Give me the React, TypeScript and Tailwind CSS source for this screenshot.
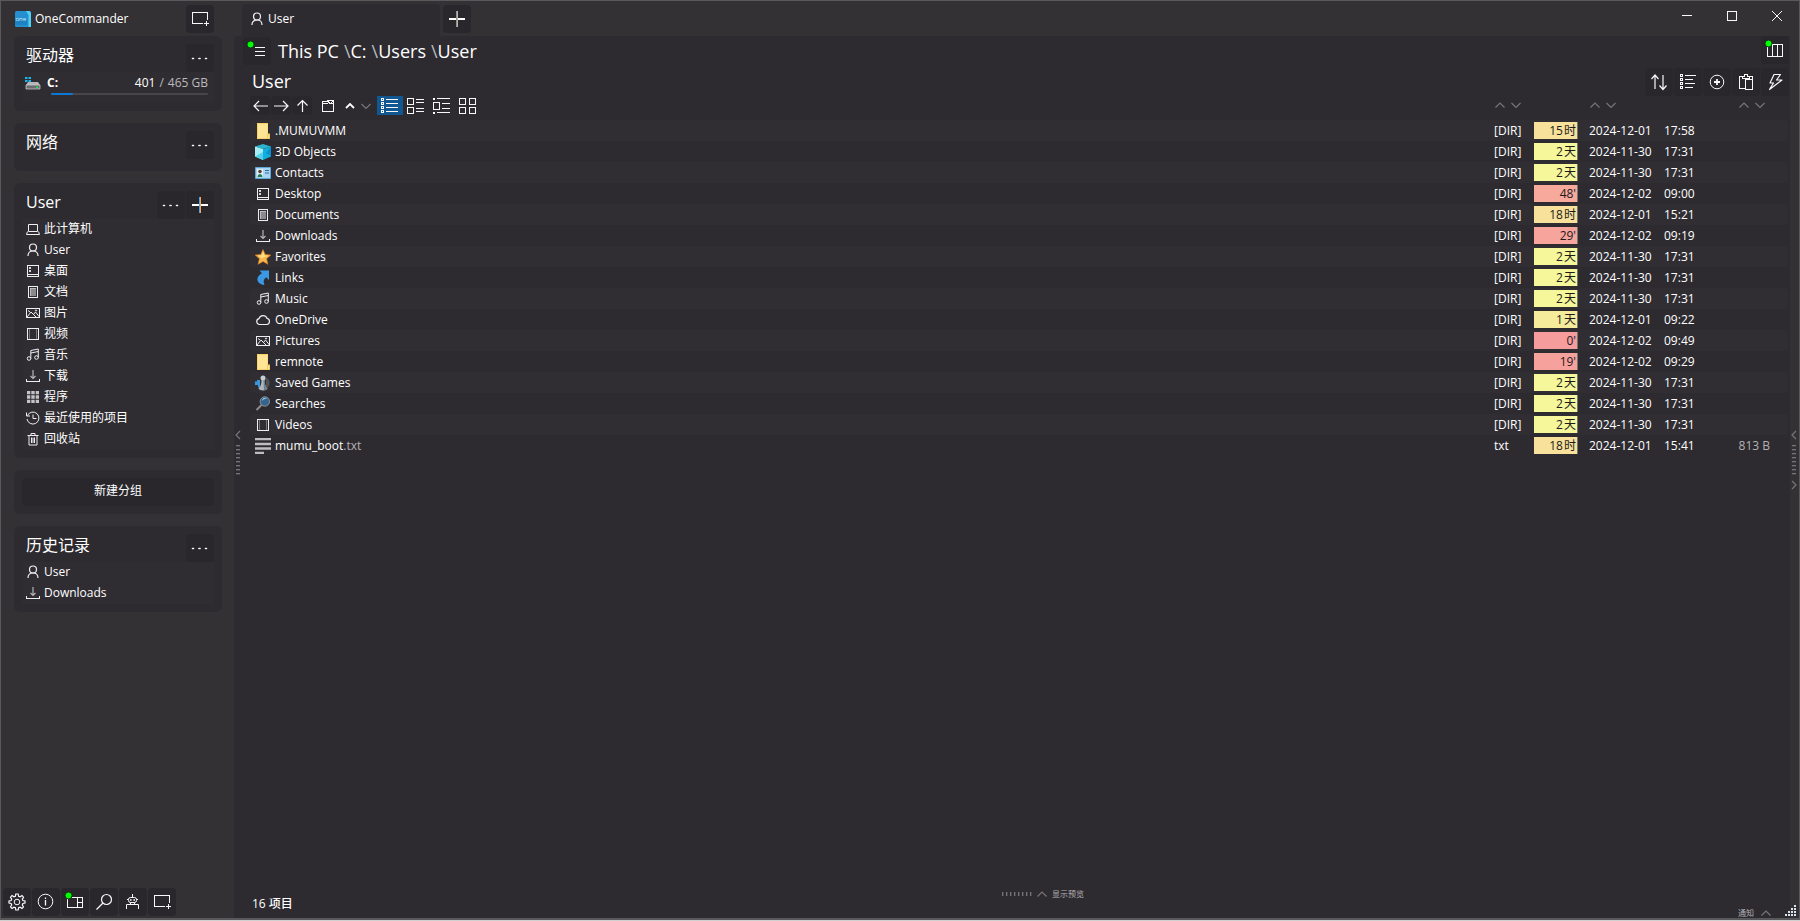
import type { ReactNode } from "react";

type IconName =
  | "pc" | "user" | "desktop" | "doc" | "picture" | "video" | "music" | "download"
  | "apps" | "recent" | "trash" | "cloud" | "folder" | "cube" | "contact" | "star"
  | "link" | "games" | "search" | "text";

const glyphs: Record<IconName, ReactNode> = {
  pc: (
    <>
      <path d="M3.500 3.500h9v7h-9z" />
      <path d="M2.500 10.500 1.500 13.500h13l-1-3" />
    </>
  ),
  user: (
    <>
      <circle cx="8" cy="5.500" r="3.500" strokeWidth="1.200" />
      <path d="M3 14c0-3 1.700-5 5-5s5 2 5 5" strokeWidth="1.200" />
    </>
  ),
  desktop: (
    <>
      <path d="M2.500 2.500h11v11h-11zM2.500 11.500h11" shapeRendering="crispEdges" />
      <path d="M4 4h2v2H4zM4 7h2v2H4z" fill="#d8d8d8" stroke="none" />
    </>
  ),
  doc: (
    <>
      <path d="M3.500 2.500h9v11h-9z" shapeRendering="crispEdges" />
      <path d="M5 4h6v8H5z" fill="#8a898c" stroke="none" />
      <path d="M5.500 4v8M6 4.500h5" stroke="#bbb" />
    </>
  ),
  picture: (
    <>
      <path d="M1.500 3.500h13v9h-13z" shapeRendering="crispEdges" />
      <path d="M2 12l4-5 5 5M8.500 9.500 10.500 7l4 5M3 5.500l2 1.500" />
      <circle cx="11" cy="5.500" r=".6" />
    </>
  ),
  video: (
    <>
      <path d="M2.500 2.500h11v11h-11z" shapeRendering="crispEdges" />
      <path d="M4.500 3v10M11.500 3v10" stroke="#77767a" shapeRendering="crispEdges" />
    </>
  ),
  music: (
    <>
      <circle cx="4" cy="11.500" r="1.800" />
      <circle cx="11.500" cy="10.500" r="1.800" />
      <path d="M5.800 11.500V3.500l7.500-1.500v8.500M5.800 6l7.500-1.500" />
    </>
  ),
  download: (
    <>
      <path d="M8 2v8M5.500 8 8 10.500 10.500 8" stroke="#b4b3b6" strokeWidth="1.200" />
      <path d="M1.500 11v2.500h13V11" shapeRendering="crispEdges" />
    </>
  ),
  apps: (
    <path
      d="M2 2h3.300v3.300H2zM6.300 2h3.400v3.300H6.300zM10.700 2H14v3.300h-3.300zM2 6.300h3.300v3.400H2zM6.300 6.300h3.400v3.400H6.300zM10.700 6.300H14v3.400h-3.300zM2 10.700h3.300V14H2zM6.300 10.700h3.400V14H6.300zM10.700 10.700H14V14h-3.300z"
      fill="#c4c3c6"
      stroke="none"
    />
  ),
  recent: (
    <>
      <path d="M2.500 5.500a6 6 0 1 1-.5 3.500M1.500 2.500v3.500H5" />
      <path d="M8 4.500V8.500h3.500" />
    </>
  ),
  trash: (
    <path d="M2.500 4.500h11M6 4.500v-2h4v2M4 4.500v9.500h8V4.500M6.500 6.500v5.500M8 6.500v5.500M9.500 6.500v5.500" />
  ),
  cloud: (
    <path d="M4.500 12.500a3 3 0 0 1-.5-5.900 4.200 4.200 0 0 1 8-.2 3.100 3.100 0 0 1-.2 6.100z" strokeWidth="1.200" />
  ),
  folder: (
    <>
      <path d="M2 0h11v10.500h2V16H2z" fill="#f9d368" stroke="none" />
      <path d="M3 1h9.500v9.500L12 15H3z" fill="#ffe595" stroke="none" />
      <path d="M12.500 11.500h2v4h-2z" fill="#ffe9a8" stroke="#e8b83c" strokeWidth=".6" />
    </>
  ),
  cube: (
    <>
      <path d="M8 0l8 2.500-8 2.500L0 2.500z" fill="#2bb4cf" stroke="none" />
      <path d="M0 2.500 8 5v11l-8-3.500z" fill="#a5edf6" stroke="none" />
      <path d="M16 2.500 8 5v11l8-3.500z" fill="#12aede" stroke="none" />
      <path d="M0 12.500 8 8v8z" fill="#4fd2e8" stroke="none" />
      <path d="M16 2.500 11 9l5 3z" fill="#0a8fd0" stroke="none" />
    </>
  ),
  contact: (
    <>
      <path d="M.5 2.500h15v11H.5z" fill="#a8d6f2" stroke="#5aa7d8" />
      <path d="M2 4h6v8H2z" fill="#e4f2f8" stroke="none" />
      <circle cx="5" cy="6.500" r="1.800" fill="#5b4034" stroke="none" />
      <path d="M2.500 12c0-4 5-4 5 0z" fill="#2d7d55" stroke="none" />
      <path d="M10 5.500h4M10 8h4" stroke="#2b6ea5" />
    </>
  ),
  star: (
    <>
      <path d="M8 .5l2.200 5 5.600.5-4.200 3.700 1.300 5.600L8 12.400l-4.900 2.900 1.300-5.600L.2 6l5.600-.5z" fill="#f9b64a" stroke="#d98224" strokeWidth=".6" />
      <path d="M8 2.200l1.500 4 3.500.5-6.500 2.500L3 6.600l3.500-.4z" fill="#ffdd84" stroke="none" />
    </>
  ),
  link: (
    <path d="M4.500.5H14v9.500L11.200 7.200C8.500 9 8 11.500 9.500 15 4 14.500 1 10.500 3 7c1-2 2.500-2.800 4-3.700z" fill="#3a98e4" stroke="none" />
  ),
  games: (
    <>
      <path d="M11 2.500a6 6 0 0 1 0 11z" fill="#515257" stroke="none" />
      <path d="M0 6.500h2V5h3v8l-2-1v-2H0z" fill="#3c95dc" stroke="none" />
      <circle cx="8" cy="3" r="2.500" fill="#c4d0d4" stroke="none" />
      <path d="M6.500 5h3c0 4 1 6.500 3 8.500-1 2.500-8 2.500-9 0 2-2 3-4.500 3-8.500z" fill="#a9b8bd" stroke="none" />
      <path d="M8.500 5h1c0 4 1 6.500 3 8.500-.5 1-2 1.500-3.500 1.700z" fill="#6f7e84" stroke="none" />
    </>
  ),
  search: (
    <>
      <path d="M1.500 14 6.500 9" stroke="#8f8b88" strokeWidth="2" />
      <circle cx="9.800" cy="5.500" r="4.700" fill="#35658f" stroke="#8d9299" />
      <path d="M7 5a3 3 0 0 1 5-2.500c-2 0-4 1-5 2.500z" fill="#92bfe0" stroke="none" />
    </>
  ),
  text: (
    <path d="M0 1h16M0 6h16M0 10.500h16M0 15h9" stroke="#bdbcbf" strokeWidth="2.300" />
  ),
};

function Glyph({ name }: { name: IconName }) {
  return (
    <svg viewBox="0 0 16 16" className="size-4 shrink-0" fill="none" stroke="#efeef0" aria-hidden="true">
      {glyphs[name]}
    </svg>
  );
}

function Line({ children }: { children: ReactNode }) {
  return (
    <svg viewBox="0 0 18 18" className="size-[18px] shrink-0 overflow-visible" fill="none" stroke="#f8f8f8" strokeWidth="1" aria-hidden="true">
      {children}
    </svg>
  );
}

function Tool({ label, children }: { label: string; children: ReactNode }) {
  return (
    <button type="button" aria-label={label} className="flex size-7 shrink-0 items-center justify-center rounded-sm bg-[#29272c]">
      {children}
    </button>
  );
}

const Dots = () => (
  <Line>
    <path d="M1 9h2v1H1zM7.500 9h2v1h-2zM14 9h2v1h-2z" fill="#fff" stroke="#fff" strokeWidth=".4" />
  </Line>
);

const Plus = () => (
  <Line>
    <path d="M1 9h16" stroke="#fff" strokeWidth="2" />
    <path d="M8.500 1v16" stroke="#5b9fe0" />
    <path d="M9.500 1v16" stroke="#f0a860" />
  </Line>
);

const NewWindow = () => (
  <Line>
    <path d="M12 13.500H1.500v-11h15v7M15.500 11v5M13 13.500h5" shapeRendering="crispEdges" />
  </Line>
);

const GreenDot = () => <circle cx="2.500" cy="2.500" r="3.500" fill="#00ff00" stroke="#143014" />;

function Chevron({ dir, tone = "#77757a" }: { dir: "up" | "down" | "left" | "right"; tone?: string }) {
  const d = {
    up: "M1.500 8.500 6 4l4.500 4.500",
    down: "M1.500 4 6 8.500 10.500 4",
    left: "M8 2 4 6l4 4",
    right: "M4 2l4 4-4 4",
  }[dir];
  return (
    <svg viewBox="0 0 12 12" className="size-3 shrink-0" fill="none" stroke={tone} strokeWidth="1.200" aria-hidden="true">
      <path d={d} />
    </svg>
  );
}

function Card({ title, tools, children }: { title: string; tools: ReactNode; children?: ReactNode }) {
  return (
    <section className="rounded-md bg-[#2d2b30] p-2">
      <header className="flex h-7 justify-between pl-1">
        <h2 className="text-base leading-[22px]">{title}</h2>
        <div className="flex gap-px">{tools}</div>
      </header>
      {children}
    </section>
  );
}

function Shortcuts({ items }: { items: [IconName, string][] }) {
  return (
    <ul className="bg-[#2f2d32]">
      {items.map(([icon, label]) => (
        <li key={label}>
          <button type="button" className="flex h-[21px] w-full items-center gap-[3px] pb-px pl-[3px]">
            <Glyph name={icon} />
            {label}
          </button>
        </li>
      ))}
    </ul>
  );
}

const places: [IconName, string][] = [
  ["pc", "此计算机"],
  ["user", "User"],
  ["desktop", "桌面"],
  ["doc", "文档"],
  ["picture", "图片"],
  ["video", "视频"],
  ["music", "音乐"],
  ["download", "下载"],
  ["apps", "程序"],
  ["recent", "最近使用的项目"],
  ["trash", "回收站"],
];

type Row = { icon: IconName; name: string; ext?: string; age: [string, string]; color: string; date: string; time: string; size?: string };

const hours = "bg-[#f7e19b]";
const days = "bg-[#f6f69b]";

const rows: Row[] = [
  { icon: "folder", name: ".MUMUVMM", age: ["15", "时"], color: hours, date: "2024-12-01", time: "17:58" },
  { icon: "cube", name: "3D Objects", age: ["2", "天"], color: days, date: "2024-11-30", time: "17:31" },
  { icon: "contact", name: "Contacts", age: ["2", "天"], color: days, date: "2024-11-30", time: "17:31" },
  { icon: "desktop", name: "Desktop", age: ["48'", ""], color: "bg-[#f7a99c]", date: "2024-12-02", time: "09:00" },
  { icon: "doc", name: "Documents", age: ["18", "时"], color: hours, date: "2024-12-01", time: "15:21" },
  { icon: "download", name: "Downloads", age: ["29'", ""], color: "bg-[#f7a49c]", date: "2024-12-02", time: "09:19" },
  { icon: "star", name: "Favorites", age: ["2", "天"], color: days, date: "2024-11-30", time: "17:31" },
  { icon: "link", name: "Links", age: ["2", "天"], color: days, date: "2024-11-30", time: "17:31" },
  { icon: "music", name: "Music", age: ["2", "天"], color: days, date: "2024-11-30", time: "17:31" },
  { icon: "cloud", name: "OneDrive", age: ["1", "天"], color: "bg-[#f6eb9b]", date: "2024-12-01", time: "09:22" },
  { icon: "picture", name: "Pictures", age: ["0'", ""], color: "bg-[#f79c9c]", date: "2024-12-02", time: "09:49" },
  { icon: "folder", name: "remnote", age: ["19'", ""], color: "bg-[#f7a19c]", date: "2024-12-02", time: "09:29" },
  { icon: "games", name: "Saved Games", age: ["2", "天"], color: days, date: "2024-11-30", time: "17:31" },
  { icon: "search", name: "Searches", age: ["2", "天"], color: days, date: "2024-11-30", time: "17:31" },
  { icon: "video", name: "Videos", age: ["2", "天"], color: days, date: "2024-11-30", time: "17:31" },
  { icon: "text", name: "mumu_boot", ext: ".txt", age: ["18", "时"], color: hours, date: "2024-12-01", time: "15:41", size: "813 B" },
];

function SortPair({ column }: { column: string }) {
  return (
    <div className="flex h-6 items-start pt-[3px]">
      <button type="button" aria-label={`${column} ↑`} className="flex w-4 justify-center">
        <Chevron dir="up" />
      </button>
      <button type="button" aria-label={`${column} ↓`} className="flex w-4 justify-center">
        <Chevron dir="down" />
      </button>
    </div>
  );
}

function SmallTool({ label, children }: { label: string; children: ReactNode }) {
  return (
    <button type="button" aria-label={label} className="flex h-[19px] w-5 items-center justify-center rounded-sm bg-[#29272c]">
      {children}
    </button>
  );
}

function ViewButton({ label, active, children }: { label: string; active?: boolean; children: ReactNode }) {
  return (
    <button
      type="button"
      aria-label={label}
      className={`flex h-[19px] w-[26px] items-center justify-center ${active ? "bg-[#115893]" : ""}`}
    >
      {children}
    </button>
  );
}

function Toolbar() {
  return (
    <div className="flex h-6 items-start">
      <div className="flex gap-px">
        <SmallTool label="后退">
          <Line><path d="M8 4 3 9l5 5M3 9h14" strokeWidth="1.200" /></Line>
        </SmallTool>
        <SmallTool label="前进">
          <Line><path d="M11 4l5 5-5 5M16 9H2" strokeWidth="1.200" /></Line>
        </SmallTool>
        <SmallTool label="向上">
          <Line><path d="M4.500 8.500l5-5 5 5M9.500 3.500V15" strokeWidth="1.200" /></Line>
        </SmallTool>
      </div>
      <button type="button" aria-label="新建文件夹" className="ml-1.5 flex h-[19px] w-5 items-center justify-center">
        <Line>
          <path d="M3.500 4.500v10h11v-8h-4l-1-2zM3.500 6.500h5M11.500 3.500h3v3M8 3.500h4" shapeRendering="crispEdges" />
          <path d="m11 7 3.500-3.500" />
        </Line>
      </button>
      <button type="button" aria-label="上一个" className="ml-1 flex h-[19px] w-4 items-center justify-center">
        <svg viewBox="0 0 12 12" className="size-3" fill="none" stroke="#fff" strokeWidth="1.800" aria-hidden="true">
          <path d="M2 8 6 4l4 4" />
        </svg>
      </button>
      <button type="button" aria-label="下一个" className="flex h-[19px] w-4 items-center justify-center">
        <Chevron dir="down" />
      </button>
      <div className="ml-[3px] flex">
        <ViewButton label="列表" active>
          <Line>
            <path d="M.5 1.500h2v2h-2zM.5 5.500h2v2h-2zM.5 9.500h2v2h-2zM.5 13.500h2v2h-2zM5 2.500h12M5 6.500h12M5 10.500h12M5 14.500h12" shapeRendering="crispEdges" />
          </Line>
        </ViewButton>
        <ViewButton label="详细信息">
          <Line>
            <path d="M.5 1.500h6v6h-6zM.5 10.500h6v6h-6zM9 2.500h8M9 5.500h8M9 11.500h8M9 14.500h8" shapeRendering="crispEdges" />
          </Line>
        </ViewButton>
        <ViewButton label="内容">
          <Line>
            <path d="M.5 5.500h6v7h-6zM4 1.500h13M9 6.500h8M9 11.500h8M4 15.500h13" shapeRendering="crispEdges" />
            <path d="M0 1h2v2H0zM0 15h2v2H0z" fill="#fff" stroke="none" />
          </Line>
        </ViewButton>
        <ViewButton label="图标">
          <Line>
            <path d="M.5 1.500h6v6h-6zM10.500 1.500h6v6h-6zM.5 10.500h6v6h-6zM10.500 10.500h6v6h-6z" shapeRendering="crispEdges" />
          </Line>
        </ViewButton>
      </div>
    </div>
  );
}

function FileTable() {
  return (
    <table className="w-full table-fixed border-separate border-spacing-0 text-left">
      <colgroup>
        <col />
        <col className="w-11" />
        <col className="w-11" />
        <col className="w-[86px]" />
        <col className="w-[70px]" />
        <col className="w-[54px]" />
      </colgroup>
      <thead>
        <tr>
          <th className="p-0"><Toolbar /></th>
          <th className="p-0 pl-0.5" colSpan={2}><SortPair column="类型" /></th>
          <th className="p-0 pl-[9px]" colSpan={2}><SortPair column="日期" /></th>
          <th className="p-0 pl-0.5"><SortPair column="大小" /></th>
        </tr>
      </thead>
      <tbody>
        {rows.map((r) => (
          <tr key={r.name} className="h-[21px] odd:bg-[#302e33]">
            <td className="rounded-l p-0 pl-[5px]">
              <div className="flex h-[21px] items-center gap-1">
                <Glyph name={r.icon} />
                <span>
                  {r.name}
                  {r.ext && <span className="text-[#b3b2b5]">{r.ext}</span>}
                </span>
              </div>
            </td>
            <td className="p-0 pl-1">{r.size ? "txt" : "[DIR]"}</td>
            <td className="p-0">
              <div className={`flex h-[17px] justify-end gap-px border-r border-[#77756a] pr-px leading-[17px] text-[#1c1b1d] ${r.color}`}>
                <span>{r.age[0]}</span>
                {r.age[1] && <span>{r.age[1]}</span>}
              </div>
            </td>
            <td className="p-0 pl-[11px]">{r.date}</td>
            <td className="p-0">{r.time}</td>
            <td className="rounded-r p-0 pr-[18px] text-right whitespace-nowrap text-[#b3b2b5]">{r.size}</td>
          </tr>
        ))}
      </tbody>
    </table>
  );
}

function Splitter({ end }: { end?: boolean }) {
  return (
    <div className="flex flex-col items-center justify-center gap-1 pb-[34px]">
      <Chevron dir="left" />
      <div className="flex flex-col gap-0.5">
        {Array.from({ length: 8 }, (_, i) => (
          <span key={i} className="h-0.5 w-1 border-t border-[#77757a] bg-[#46444a]" />
        ))}
      </div>
      {end ? <Chevron dir="right" /> : <span className="size-3" />}
    </div>
  );
}

function Sidebar() {
  return (
    <aside className="flex w-[233px] shrink-0 flex-col">
      <div className="flex h-[35px] items-center justify-between pr-5 pl-3.5">
        <div className="flex items-center gap-1">
          <svg viewBox="0 0 16 16" className="size-4" aria-hidden="true">
            <rect width="16" height="16" rx="1.500" fill="#268fcf" />
            <path d="M11 0h3.500L16 2v14h-2.500V4z" fill="#4ed2f6" />
            <path d="M0 8h12v6H0z" fill="#187ab9" opacity=".6" />
            <text x="0.500" y="10" fontSize="6" fontFamily="Open Sans, sans-serif" fill="#d8effb">one</text>
          </svg>
          <h1>OneCommander</h1>
        </div>
        <Tool label="新建窗口"><NewWindow /></Tool>
      </div>
      <div className="flex flex-col gap-3 pr-3 pl-[13px]">
        <Card title="驱动器" tools={<Tool label="更多"><Dots /></Tool>}>
          <button type="button" className="flex h-[31px] w-full flex-col bg-[#2f2d32] pr-1.5 pl-[3px]">
            <span className="flex h-[21px] w-full items-center">
              <svg viewBox="0 0 16 14" className="h-3.5 w-4" aria-hidden="true">
                <path d="M0 1h2.500v2H0zM3.500 1H6v2H3.500zM0 4h2.500v2H0zM3.500 4H6v2H3.500z" fill="#16b9f0" />
                <path d="M3 6h10l2 3H1z" fill="#b5b6b8" />
                <path d="M1 9h14v4H1z" fill="#6b6d70" stroke="#d1d2d4" strokeWidth=".7" />
                <path d="M11 10.500h2v1.500h-2z" fill="#21e04a" />
              </svg>
              <span className="ml-1.5 font-bold">C:</span>
              <span className="ml-auto flex gap-1">
                <span>401</span>
                <span className="text-[#bbbabd]">/</span>
                <span className="text-[#bbbabd]">465 GB</span>
              </span>
            </span>
            <span className="ml-[26px] flex h-0.5 self-stretch rounded bg-[#48464b]">
              <span className="w-[14%] rounded bg-[#0b78d6]" />
            </span>
          </button>
        </Card>
        <Card title="网络" tools={<Tool label="更多"><Dots /></Tool>}>
          <div className="h-1" />
        </Card>
        <Card
          title="User"
          tools={
            <>
              <Tool label="更多"><Dots /></Tool>
              <Tool label="添加"><Plus /></Tool>
            </>
          }
        >
          <Shortcuts items={places} />
        </Card>
        <section className="rounded-md bg-[#2d2b30] p-2">
          <button type="button" className="h-7 w-full rounded-sm bg-[#29272c] pb-0.5 text-white">新建分组</button>
        </section>
        <Card title="历史记录" tools={<Tool label="更多"><Dots /></Tool>}>
          <Shortcuts items={[["user", "User"], ["download", "Downloads"]]} />
        </Card>
      </div>
      <nav className="mt-auto flex gap-px pb-0.5 pl-0.5">
        <Tool label="设置">
          <Line>
            <path d="M7.800 1h2.400l.4 2.200 1.500.6 1.900-1.200 1.500 1.600-1.200 1.900.6 1.400 2.100.4v2.200l-2.100.4-.6 1.500 1.200 1.900-1.500 1.600-1.900-1.300-1.500.6-.4 2.200H7.800l-.4-2.200-1.500-.6L4 15.500l-1.500-1.600L3.700 12l-.6-1.500L1 10.100V7.900l2.100-.4.6-1.400-1.200-1.900L4 2.600l1.900 1.200 1.500-.6z" strokeWidth="1.200" />
            <circle cx="9" cy="9" r="2.800" />
          </Line>
        </Tool>
        <Tool label="信息">
          <Line>
            <circle cx="8.500" cy="8.500" r="7.300" />
            <path d="M8.500 7v5.500M8.500 4.500v1.400" strokeWidth="1.300" />
          </Line>
        </Tool>
        <Tool label="面板">
          <Line>
            <path d="M1.500 5v9.500h15v-10H6M11.500 4.500v10M11.500 9.500h5" shapeRendering="crispEdges" />
            <GreenDot />
          </Line>
        </Tool>
        <Tool label="搜索">
          <Line>
            <circle cx="11.500" cy="6.500" r="5" strokeWidth="1.200" />
            <path d="M8 10 1.500 16.500" strokeWidth="1.300" />
          </Line>
        </Tool>
        <Tool label="脚本">
          <Line>
            <path d="M8.500 1v3M4.500 6.500a2 2 0 0 1 2-2h4a2 2 0 0 1 2 2v1a2 2 0 0 1-2 2h-4a2 2 0 0 1-2-2zM3 6.500h1.500M12.500 6.500H14M6.500 9.500v2M10.500 9.500v2M2.500 16v-4.500h12V16" />
            <path d="M6 6.200h1.600v1.500H6zM9.400 6.200H11v1.500H9.400z" fill="#fff" stroke="none" />
          </Line>
        </Tool>
        <Tool label="新建窗口"><NewWindow /></Tool>
      </nav>
    </aside>
  );
}

export default function App() {
  return (
    <div className="relative flex h-screen flex-col bg-[#d0d0d0] font-['Open_Sans','Noto_Sans_CJK_SC',sans-serif] text-xs text-white">
      <div className="flex min-h-0 flex-1 border border-b-2 border-[#59585a] bg-[#333134]">
        <Sidebar />
        <div className="flex min-w-0 flex-1 flex-col">
          <div className="flex h-[35px] justify-between">
            <div className="flex gap-[3px] pt-[3px] pl-2">
              <button type="button" className="flex w-[198px] items-center gap-[3px] rounded-t bg-[#2d2b30] pb-[3px] pl-[7px]">
                <Glyph name="user" />
                User
              </button>
              <div className="pt-px">
                <Tool label="新标签页"><Plus /></Tool>
              </div>
            </div>
            <div className="flex h-[30px]">
              <button type="button" aria-label="最小化" className="flex w-[45px] items-center justify-center">
                <Line><path d="M4 8.500h10" shapeRendering="crispEdges" /></Line>
              </button>
              <button type="button" aria-label="最大化" className="flex w-[45px] items-center justify-center">
                <Line><path d="M4.500 4.500h9v9h-9z" shapeRendering="crispEdges" /></Line>
              </button>
              <button type="button" aria-label="关闭" className="flex w-[45px] items-center justify-center">
                <Line><path d="m4 4 10 10M14 4 4 14" /></Line>
              </button>
            </div>
          </div>
          <div className="flex min-h-0 flex-1">
            <main className="flex min-w-0 flex-1 rounded-tl bg-[#2d2b30]">
              <div className="flex w-4 shrink-0">
                <div className="flex w-2 justify-center">
                  <Splitter />
                </div>
              </div>
              <div className="flex min-w-0 flex-1 flex-col">
                <div className="flex h-8 items-start justify-between pr-px">
                  <div className="-ml-[7px] flex items-center">
                    <Tool label="菜单">
                      <Line>
                        <path d="M7 5.500h10M7 9.500h10M7 13.500h10" shapeRendering="crispEdges" />
                        <GreenDot />
                      </Line>
                    </Tool>
                    <nav className="ml-[7px] flex gap-[5px] pt-px text-lg leading-7">
                      <button type="button">This PC</button>
                      {["C:", "Users", "User"].map((part) => (
                        <button type="button" key={part}>
                          <span className="text-[#bbbabd]">\</span>
                          {part}
                        </button>
                      ))}
                    </nav>
                  </div>
                  <Tool label="列视图">
                    <Line>
                      <path d="M1.500 4v11.500h15v-12H5M6.500 4v11M11.500 4v11" shapeRendering="crispEdges" />
                      <GreenDot />
                    </Line>
                  </Tool>
                </div>
                <div className="flex h-7 justify-between pr-px">
                  <h2 className="pl-0.5 text-lg leading-[26px]">User</h2>
                  <div className="flex gap-px">
                    <Tool label="排序">
                      <Line><path d="M1.500 6 5 2l3.500 4M5 2v14M9.500 12.500 13 16.500l3.500-4M13 16.500V2" strokeWidth="1.200" /></Line>
                    </Tool>
                    <Tool label="分组">
                      <Line>
                        <path d="M1.500 1.500h2v2h-2zM1.500 5.500h2v2h-2zM1.500 9.500h2v2h-2zM1.500 13.500h2v2h-2zM6 2.500h11M6 6.500h8M6 10.500h10M6 14.500h8" shapeRendering="crispEdges" />
                      </Line>
                    </Tool>
                    <Tool label="新建">
                      <Line>
                        <circle cx="9" cy="9" r="6.800" />
                        <path d="M9 6v6M6 9h6" strokeWidth="1.800" />
                      </Line>
                    </Tool>
                    <Tool label="粘贴">
                      <Line><path d="M8.500 15.500h-6v-12h3v2h7v-2h3v3M5.500 3.500h2v-2h3v2h2M8.500 6.500h7v10h-7z" shapeRendering="crispEdges" /></Line>
                    </Tool>
                    <Tool label="操作">
                      <Line><path d="M8 1.500h6.500l-4 5.500H16L3.500 16.500 7.500 10H4z" strokeLinejoin="round" strokeWidth="1.200" /></Line>
                    </Tool>
                  </div>
                </div>
                <div className="mr-0.5">
                  <FileTable />
                </div>
                <footer className="mt-auto flex h-9 justify-between">
                  <div className="flex-1 pt-3.5 pl-0.5 font-medium">16 项目</div>
                  <button type="button" className="ml-[62px] flex h-6 items-center gap-1 text-[8px] text-[#b3b2b5]">
                    <span className="flex gap-0.5">
                      {Array.from({ length: 8 }, (_, i) => (
                        <span key={i} className="h-1 w-0.5 border-l border-[#77757a] bg-[#46444a]" />
                      ))}
                    </span>
                    <Chevron dir="up" />
                    显示预览
                  </button>
                  <div className="flex flex-1 items-end justify-end pr-[18px]">
                    <button type="button" className="flex h-2.5 items-center gap-1.5 text-[8px] leading-none text-[#b3b2b5]">
                      通知
                      <Chevron dir="up" />
                    </button>
                  </div>
                </footer>
              </div>
            </main>
            <div className="flex w-[9px] shrink-0 justify-center pr-px">
              <Splitter end />
            </div>
          </div>
        </div>
      </div>
      <div className="h-px" />
      <svg viewBox="0 0 12 12" className="absolute right-[3px] bottom-1 size-3" fill="#d9e4ee" shapeRendering="crispEdges" aria-hidden="true">
        <path d="M9 0h2v2H9zM9 3h2v2H9zM6 3h2v2H6zM9 6h2v2H9zM6 6h2v2H6zM3 6h2v2H3zM9 9h2v2H9zM6 9h2v2H6zM3 9h2v2H3zM0 9h2v2H0z" />
      </svg>
    </div>
  );
}
